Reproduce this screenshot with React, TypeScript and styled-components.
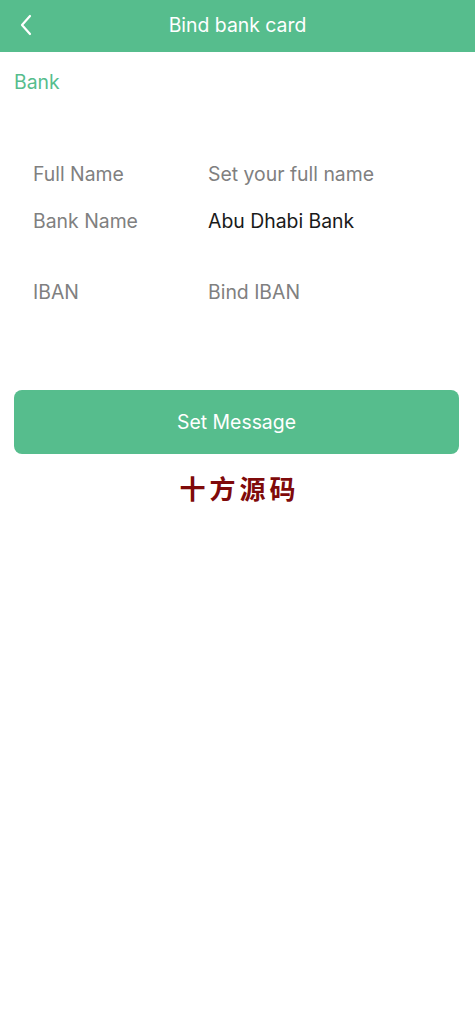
import React from "react";
import styled, { createGlobalStyle } from "styled-components";

const GlobalStyle = createGlobalStyle`
  body {
    margin: 0;
    background: #ffffff;
    font-family: Inter, "Noto Sans", "Liberation Sans", sans-serif;
  }
`;

const Page = styled.div`
  width: 475px;
  min-height: 1024px;
  background: #ffffff;
`;

const Header = styled.header`
  height: 52px;
  background: #56bd8d;
  display: flex;
  align-items: center;
  justify-content: center;
  position: relative;
`;

const BackButton = styled.button`
  position: absolute;
  left: 12px;
  top: 10px;
  width: 28px;
  height: 30px;
  padding: 0;
  border: none;
  background: transparent;
  display: flex;
  align-items: center;
  justify-content: center;
`;

const Title = styled.h1`
  margin: 0;
  color: #ffffff;
  font-size: 19.4px;
  font-weight: 400;
  line-height: 1;
`;

const SectionLabel = styled.div`
  padding: 16px 14px 0;
  color: #56bd8d;
  font-size: 19.4px;
  line-height: 28px;
`;

const Form = styled.div`
  padding: 54px 0 0 33px;
  display: flex;
  flex-direction: column;
`;

const Row = styled.div<{ $height: number }>`
  display: flex;
  align-items: center;
  height: ${(p) => p.$height}px;
`;

const Label = styled.span`
  width: 175px;
  color: #808080;
  font-size: 19.4px;
`;

const Value = styled.span<{ $filled?: boolean }>`
  color: ${(p) => (p.$filled ? "#1a1a1a" : "#808080")};
  font-size: 19.4px;
`;

const SubmitButton = styled.button`
  margin: 51px 16px 0 14px;
  width: 445px;
  height: 64px;
  border: none;
  border-radius: 8px;
  background: #56bd8d;
  color: #ffffff;
  font-family: inherit;
  font-size: 19.4px;
  display: block;
`;

const Watermark = styled.div`
  margin-top: 17px;
  text-align: center;
  color: #7f0a0a;
  font-family: "Noto Sans CJK SC", sans-serif;
  font-size: 26px;
  font-weight: 700;
  letter-spacing: 4px;
  line-height: 34px;
  padding-left: 4px;
`;

const rows = [
  { label: "Full Name", value: "Set your full name", filled: false, height: 47 },
  { label: "Bank Name", value: "Abu Dhabi Bank", filled: true, height: 47 },
  { label: "IBAN", value: "Bind IBAN", filled: false, height: 95 },
];

const App: React.FC = () => (
  <Page>
    <GlobalStyle />
    <Header>
      <BackButton aria-label="Back">
        <svg width="14" height="22" viewBox="0 0 14 22" fill="none">
          <path d="M11 2 L3 11 L11 20" stroke="#ffffff" strokeWidth="2.2" strokeLinecap="round" strokeLinejoin="round" />
        </svg>
      </BackButton>
      <Title>Bind bank card</Title>
    </Header>
    <SectionLabel>Bank</SectionLabel>
    <Form>
      {rows.map((r) => (
        <Row key={r.label} $height={r.height}>
          <Label>{r.label}</Label>
          <Value $filled={r.filled}>{r.value}</Value>
        </Row>
      ))}
    </Form>
    <SubmitButton>Set Message</SubmitButton>
    <Watermark>十方源码</Watermark>
  </Page>
);

export default App;
